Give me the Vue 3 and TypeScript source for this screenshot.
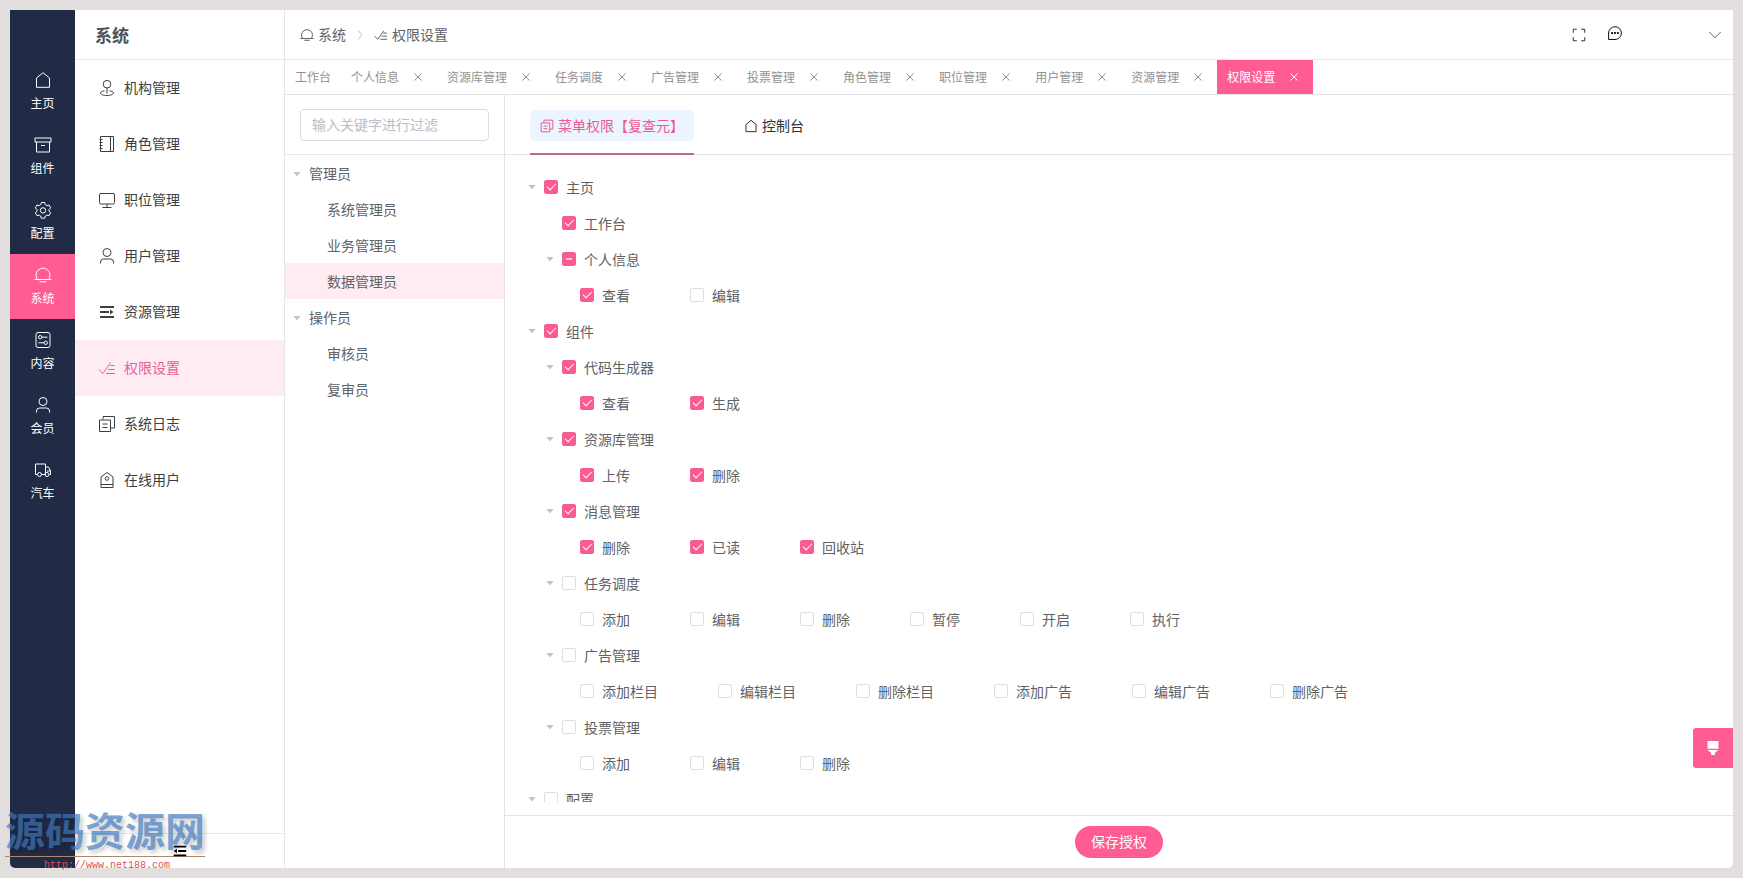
<script setup lang="ts">
import { h, reactive, ref } from 'vue'

interface Shape { d: string; fill?: boolean }

const icons: Record<string, Shape[]> = {
  house: [{ d: 'M2.5 16.3V7L9 1.7 15.5 7v9.3z' }],
  box: [{ d: 'M1 2h16v4H1zM2.5 6v10h13V6M7 9.5h4' }],
  gear: [
    { d: 'M7.3 1.5h3.4l.6 2.200 1.500.9 2.200-.6 1.600 2.900-1.500 1.600v1.700l1.500 1.600-1.600 2.900-2.200-.6-1.500.9-.6 2.200H7.300l-.6-2.200-1.500-.9-2.200.6-1.600-2.900 1.500-1.600V8.500L1.400 6.900 3 4l2.200.6 1.500-.9z' },
    { d: 'M6.300 9.400a2.700 2.700 0 1 0 5.400 0a2.700 2.700 0 1 0-5.400 0z' },
  ],
  dome: [{ d: 'M3.500 13.500a7 7 0 1 1 11 0M.5 13.500h17M5.500 15.800h7' }],
  sliders: [
    { d: 'M4 1.500h10a2 2 0 0 1 2 2v11a2 2 0 0 1-2 2H4a2 2 0 0 1-2-2v-11a2 2 0 0 1 2-2z' },
    { d: 'M4.500 6.200a1.700 1.700 0 1 0 3.400 0a1.700 1.700 0 1 0-3.400 0zM8 6.200h5.500M10 11.800a1.700 1.700 0 1 0 3.400 0a1.700 1.700 0 1 0-3.400 0zM4.500 11.800H10' },
  ],
  user: [{ d: 'M5 5.500a4 4 0 1 0 8 0a4 4 0 1 0-8 0zM2.500 16.500V15a3 3 0 0 1 3-3h7a3 3 0 0 1 3 3v1.500' }],
  truck: [
    { d: 'M3.500 13.500H1.500V3H11.500V13.500H7.500M11.500 6h3l2 4V13.500h-1.500M13 10h4' },
    { d: 'M3.500 13.500a2 2 0 1 0 4 0a2 2 0 1 0-4 0zM11 13.500a2 2 0 1 0 4 0a2 2 0 1 0-4 0z' },
  ],
  place: [{ d: 'M5.200 5.200a3.800 3.800 0 1 0 7.600 0a3.800 3.800 0 1 0-7.600 0zM9 9v5.500M6.500 11.800C4 12.200 2.500 13 2.500 14c0 1.500 3 2.500 6.500 2.500s6.500-1 6.500-2.500c0-1-1.500-1.800-4-2.200' }],
  notebook: [{ d: 'M2.500 1.500h13v15h-13zM12.500 1.500v15M1.500 4.500h3M1.500 7.500h3M1.500 10.500h3M1.500 13.500h3' }],
  monitor: [{ d: 'M3 2.500h12a1.500 1.500 0 0 1 1.500 1.500v7.500a1.500 1.500 0 0 1-1.500 1.500H3a1.500 1.500 0 0 1-1.500-1.500V4a1.500 1.500 0 0 1 1.500-1.500zM9 13v3M4.500 16.500h9' }],
  indent: [{ d: 'M2 3h14v2H2zM2 8h9v2H2zM2 13h14v2H2zM12 6.500L15.500 9 12 11.500z', fill: true }],
  outdent: [{ d: 'M2 3h14v2H2zM7 8h9v2H7zM2 13h14v2H2zM5.500 6.500L2 9l3.500 2.500z', fill: true }],
  checklist: [{ d: 'M.8 10.500L5 14.500 12.500 3.500M12 6.500h4.500M10 10.500h6.500M8 14.500h9' }],
  copy: [{ d: 'M1.500 5h11v11.500h-11zM5 4.500V1.500h11.500v11.500h-4M4.500 9h5M4.500 12.500h5' }],
  tag: [{ d: 'M3 16.500V6L9 1.500 15 6v10.500zM3 13.500h12M7.200 7.500a1.800 1.800 0 1 0 3.600 0a1.800 1.800 0 1 0-3.600 0z' }],
  full: [{ d: 'M2.500 6.500v-4h4M11.500 2.500h4v4M15.500 11.500v4h-4M6.500 15.500h-4v-4' }],
  chat: [
    { d: 'M1.800 16.300V9a7.200 7.200 0 1 1 7.200 7.300z' },
    { d: 'M4.800 8h2v2h-2zM8 8h2v2H8zM11.200 8h2v2h-2z', fill: true },
  ],
  down: [{ d: 'M1.500 5L9 12.500 16.500 5' }],
  right: [{ d: 'M6 2l6 7-6 7' }],
  close: [{ d: 'M1 1l16 16M17 1L1 17' }],
  brush: [{ d: 'M2 0h14v10H2zM2 11.500h14L11.500 15v4h-5v-4z', fill: true }],
}

const Icon = (props: { name: string }) =>
  h('svg', { viewBox: '0 0 18 18', 'aria-hidden': 'true' }, icons[props.name].map(s =>
    h('path', { d: s.d, fill: s.fill ? 'currentColor' : 'none', stroke: s.fill ? 'none' : 'currentColor', 'vector-effect': 'non-scaling-stroke' })))
Icon.props = ['name']

const rail = [
  { icon: 'house', label: '主页' },
  { icon: 'box', label: '组件' },
  { icon: 'gear', label: '配置' },
  { icon: 'dome', label: '系统' },
  { icon: 'sliders', label: '内容' },
  { icon: 'user', label: '会员' },
  { icon: 'truck', label: '汽车' },
]

const menu = [
  { icon: 'place', label: '机构管理' },
  { icon: 'notebook', label: '角色管理' },
  { icon: 'monitor', label: '职位管理' },
  { icon: 'user', label: '用户管理' },
  { icon: 'indent', label: '资源管理' },
  { icon: 'checklist', label: '权限设置' },
  { icon: 'copy', label: '系统日志' },
  { icon: 'tag', label: '在线用户' },
]

const pages = ['工作台', '个人信息', '资源库管理', '任务调度', '广告管理', '投票管理', '角色管理', '职位管理', '用户管理', '资源管理', '权限设置']

const activeRail = ref('系统')
const activeMenu = ref('权限设置')
const activePage = ref('权限设置')
const activeRole = ref('数据管理员')
const keyword = ref('')

const roles = [
  { label: '管理员', children: ['系统管理员', '业务管理员', '数据管理员'] },
  { label: '操作员', children: ['审核员', '复审员'] },
]

interface Check { label: string; on: boolean }
interface Row { level: number; caret: boolean; half?: boolean; items: Check[] }

const node = (level: number, label: string, on: boolean, caret = true, half = false): Row =>
  ({ level, caret, half, items: [{ label, on }] })
const acts = (on: string[], off: string[] = []): Row => ({
  level: 2,
  caret: false,
  items: [...on.map(label => ({ label, on: true })), ...off.map(label => ({ label, on: false }))],
})

const rows = reactive<Row[]>([
  node(0, '主页', true),
  node(1, '工作台', true, false),
  node(1, '个人信息', false, true, true),
  acts(['查看'], ['编辑']),
  node(0, '组件', true),
  node(1, '代码生成器', true),
  acts(['查看', '生成']),
  node(1, '资源库管理', true),
  acts(['上传', '删除']),
  node(1, '消息管理', true),
  acts(['删除', '已读', '回收站']),
  node(1, '任务调度', false),
  acts([], ['添加', '编辑', '删除', '暂停', '开启', '执行']),
  node(1, '广告管理', false),
  acts([], ['添加栏目', '编辑栏目', '删除栏目', '添加广告', '编辑广告', '删除广告']),
  node(1, '投票管理', false),
  acts([], ['添加', '编辑', '删除']),
  node(0, '配置', false),
])
</script>

<template>
  <div class="shell">
    <div class="app">
      <nav class="rail">
        <a v-for="r in rail" :key="r.label" href="#" :class="{ on: r.label === activeRail }" @click.prevent="activeRail = r.label">
          <Icon :name="r.icon" class="i18" />
          <span>{{ r.label }}</span>
        </a>
      </nav>

      <aside class="side">
        <h1>系统</h1>
        <nav>
          <a v-for="m in menu" :key="m.label" href="#" :class="{ on: m.label === activeMenu }" @click.prevent="activeMenu = m.label">
            <Icon :name="m.icon" class="i18" />
            <span>{{ m.label }}</span>
          </a>
        </nav>
        <div class="fold">
          <button type="button" aria-label="收起菜单"><Icon name="outdent" class="i16" /></button>
        </div>
      </aside>

      <div class="main">
        <header class="top">
          <div class="crumbs">
            <a href="#"><Icon name="dome" class="i14" />系统</a>
            <Icon name="right" class="sep" />
            <a href="#"><Icon name="checklist" class="i14" />权限设置</a>
          </div>
          <div class="tools">
            <button type="button" aria-label="全屏"><Icon name="full" class="i16" /></button>
            <button type="button" class="chat" aria-label="消息"><Icon name="chat" class="i16" /></button>
            <button type="button" class="account" aria-label="账户"><Icon name="down" class="i14" /></button>
          </div>
        </header>

        <div class="pages">
          <div v-for="(p, i) in pages" :key="p" class="page" :class="{ on: p === activePage }">
            <a href="#" @click.prevent="activePage = p">{{ p }}</a>
            <button v-if="i > 0" type="button" :aria-label="'关闭' + p"><Icon name="close" class="x" /></button>
          </div>
        </div>

        <div class="content">
          <section class="roles">
            <div class="filter">
              <input v-model="keyword" type="text" placeholder="输入关键字进行过滤" aria-label="输入关键字进行过滤">
            </div>
            <div v-for="g in roles" :key="g.label">
              <div class="role">
                <button type="button" class="caret" :aria-label="'展开' + g.label"></button>
                <span>{{ g.label }}</span>
              </div>
              <a v-for="c in g.children" :key="c" href="#" class="role child" :class="{ on: c === activeRole }" @click.prevent="activeRole = c">{{ c }}</a>
            </div>
          </section>

          <section class="rights">
            <div class="tabs">
              <button type="button" class="on"><span><Icon name="copy" class="i14" />菜单权限【复查元】</span></button>
              <button type="button"><span><Icon name="house" class="i14" />控制台</span></button>
            </div>
            <div class="tree">
              <div v-for="(row, i) in rows" :key="i" class="row" :class="'l' + row.level">
                <button v-if="row.caret" type="button" class="caret" :aria-label="'展开' + row.items[0].label"></button>
                <span v-else class="blank"></span>
                <label v-for="c in row.items" :key="c.label">
                  <input v-model="c.on" type="checkbox" :indeterminate.prop="!!row.half">
                  <span>{{ c.label }}</span>
                </label>
              </div>
            </div>
            <footer><button type="button">保存授权</button></footer>
          </section>
        </div>
      </div>

      <button type="button" class="theme" aria-label="主题"><Icon name="brush" class="i14" /></button>
    </div>

    <div class="mark">
      <strong>源码资源网</strong>
      <span>http://www.net188.com</span>
    </div>
  </div>
</template>

<style>
html, body { margin: 0; overflow: hidden; }
</style>

<style scoped>
.shell {
  box-sizing: border-box;
  position: relative;
  height: 100vh;
  padding: 10px;
  background: #e4dfdf;
  color: #606266;
  font: 14px/20px "Liberation Sans", "Noto Sans CJK SC", sans-serif;
}
.shell *, .shell *::after { box-sizing: border-box; }
a { color: inherit; text-decoration: none; }
button { padding: 0; border: 0; background: none; color: inherit; font: inherit; cursor: pointer; }
svg { flex: none; display: block; }
.i18 { width: 18px; height: 18px; }
.i16 { width: 16px; height: 16px; }
.i14 { width: 14px; height: 14px; }

.app { position: relative; display: flex; height: 100%; background: #fff; border-radius: 0 0 5px 5px; }

.rail { flex: none; width: 65px; padding-top: 49px; background: #222b45; color: #fff; border-bottom-left-radius: 5px; }
.rail a {
  display: flex; flex-direction: column; align-items: center; gap: 6px;
  height: 65px; padding-top: 12px; font-size: 12px; line-height: 18px;
}
.rail a.on { background: #ff5c93; }

.side { flex: none; display: flex; flex-direction: column; width: 210px; border-right: 1px solid #e6e6e6; }
.side h1 { margin: 0; height: 50px; padding-left: 20px; border-bottom: 1px solid #e9e9e9; color: #4b525d; font-size: 17px; line-height: 54px; }
.side nav { flex: 1; }
.side nav a { display: flex; align-items: center; gap: 8px; height: 56px; padding-left: 23px; color: #3c3e42; }
.side nav a.on { background: #ffecf3; color: #e8609a; }
.fold { display: flex; align-items: center; justify-content: center; height: 35px; border-top: 1px solid #e9e9e9; }
.fold button { position: relative; z-index: 3; color: #000; }

.main { flex: 1; min-width: 0; display: flex; flex-direction: column; }
.top { flex: none; display: flex; align-items: center; justify-content: space-between; height: 50px; padding: 0 11px 0 15px; border-bottom: 1px solid #e9e9e9; }
.crumbs { display: flex; align-items: center; }
.crumbs a { display: flex; align-items: center; gap: 4px; }
.sep { width: 12px; height: 12px; margin: 0 8px; color: #c0c4cc; }
.tools { display: flex; align-items: center; color: #303133; }
.chat { margin-left: 20px; padding-bottom: 3px; color: #111; }
.account { display: flex; justify-content: flex-end; width: 99px; color: #606266; }

.pages { flex: none; display: flex; height: 35px; border-bottom: 1px solid #e3e3e3; color: #929292; font-size: 12px; }
.page { display: flex; align-items: center; gap: 10px; padding: 0 10px; }
.page a { padding-top: 2px; }
.page button { display: grid; place-items: center; width: 18px; height: 18px; }
.page.on { background: #ff5c93; color: #fff; }
.x { width: 8px; height: 8px; }

.content { flex: 1; min-height: 0; display: flex; }
.roles { flex: none; width: 220px; border-right: 1px solid #e3e3e3; }
.filter { height: 60px; padding: 14px 15px; border-bottom: 1px solid #e9e9e9; }
.filter input { width: 100%; height: 32px; padding: 0 11px; border: 1px solid #d9dbe0; border-radius: 4px; outline: 0; color: inherit; font: inherit; }
.filter input::placeholder { color: #b9bec7; opacity: 1; }
.role { display: flex; align-items: center; gap: 8px; height: 36px; padding: 2px 0 0 8px; }
.role.child { padding-left: 42px; }
.role.on { background: #ffecf3; }
.caret { flex: none; width: 8px; height: 5px; background: #c0c4cc; clip-path: polygon(0 0, 100% 0, 50% 100%); }
.blank { flex: none; width: 8px; }

.rights { flex: 1; min-width: 0; display: flex; flex-direction: column; }
.tabs { flex: none; display: flex; gap: 40px; height: 60px; padding-left: 25px; border-bottom: 1px solid #e3e3e3; color: #303133; }
.tabs button { height: 60px; padding-top: 3px; border-bottom: 2px solid transparent; }
.tabs span { display: flex; align-items: center; gap: 4px; height: 31px; padding: 0 10px; border-radius: 5px; }
.tabs .on { border-color: #c0688f; color: #ec5a94; }
.tabs .on span { background: #ecf5ff; }
.tree { flex: 1; min-height: 0; margin: 14px 0 13px; overflow: hidden; padding-left: 23px; }
.row { display: flex; align-items: center; gap: 8px; height: 36px; }
.l1 { padding-left: 18px; }
.l2 { padding-left: 36px; }
.row label { display: flex; align-items: center; gap: 8px; }
.row label + label { margin-left: 52px; }
.row label span { padding-top: 2px; }
.row input {
  appearance: none; flex: none; display: grid; place-items: center;
  width: 14px; height: 14px; margin: 0; border: 1px solid #dcdfe6; border-radius: 2px; background: #fff;
}
.row input:checked, .row input:indeterminate { border-color: #f85c93; background: #f85c93; }
.row input:checked::after { content: ""; width: 9px; height: 5px; margin-bottom: 3px; border: solid #fff; border-width: 0 0 1px 1px; transform: rotate(-45deg); }
.row input:indeterminate::after { content: ""; width: 6px; height: 2px; margin: 0; border: 0; background: #ffc4da; transform: none; }
.rights footer { flex: none; display: flex; justify-content: center; padding: 10px; border-top: 1px solid #e3e3e3; }
.rights footer button { height: 32px; padding: 0 16px; border-radius: 16px; background: #ff5c93; color: #fff; }

.theme {
  position: absolute; right: 0; bottom: 100px; display: grid; place-items: center;
  width: 40px; height: 40px; border-radius: 3px 0 0 3px; background: #ff5c93; color: #fff;
}

.mark { position: absolute; left: 5px; bottom: 3px; z-index: 2; width: 200px; pointer-events: none; }
.mark strong {
  display: block; height: 48px; border-bottom: 1px solid #a8896c; color: rgba(62, 122, 192, .68);
  font-size: 40px; line-height: 46px; text-shadow: 3px 3px 4px rgba(0, 0, 0, .2); white-space: nowrap;
}
.mark span { display: block; padding-left: 39px; color: #d9505f; font: 10px/18px "Liberation Mono", monospace; }
</style>
